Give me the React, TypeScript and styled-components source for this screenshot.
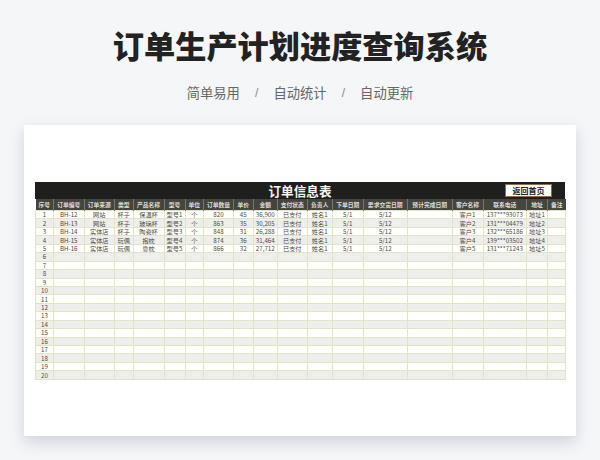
import React from 'react';
import styled, { createGlobalStyle } from 'styled-components';

const Global = createGlobalStyle`
  html, body { margin: 0; padding: 0; background: #f5f6f8; }
  body { width: 600px; height: 460px; overflow: hidden; font-family: "Noto Sans CJK SC", "Noto Sans", sans-serif; }
`;

const Page = styled.div`
  width: 600px; height: 460px; display: flex; flex-direction: column; align-items: center;
  box-sizing: border-box; padding-top: 23px;
`;
const Title = styled.h1`
  margin: 0; font-size: 31.2px; line-height: 44px; font-weight: 900; color: #222; white-space: nowrap;
`;
const Tagline = styled.div`
  margin-top: 16px; height: 20px; display: flex; align-items: center; color: #666;
  font-size: 13.3px; line-height: 20px; letter-spacing: 0;
`;
const Slash = styled.span`
  width: 33.5px; text-align: center; font-size: 12px; color: #888; font-family: "Liberation Sans", sans-serif;
`;
const Card = styled.section`
  margin-top: 22px; width: 552px; height: 311px; box-sizing: border-box; padding: 57px 11px 0;
  background: #fff; box-shadow: 0 6px 14px rgba(120, 130, 150, 0.3);
`;
const TitleBar = styled.div`
  height: 17px; background: #1f1f1d; display: grid; grid-template-columns: 1fr auto 1fr; align-items: center;
`;
const BarTitle = styled.div`
  grid-column: 2; color: #f4f4f4; font-size: 12.6px; line-height: 17px; font-weight: 700;
`;
const BackButton = styled.button`
  grid-column: 3; justify-self: end; margin: 0 13px 0 0; padding: 0; width: 47px; height: 13px; box-sizing: border-box;
  border: 1.5px solid #a5662a; background: #fff; color: #222; font: 700 8px/10px "Noto Sans CJK SC", sans-serif;
`;
const Sheet = styled.table`
  width: 530px; table-layout: fixed; border-collapse: collapse; font-size: 6.2px; color: #4a4a4a;
`;
const Head = styled.th`
  height: 11px; padding: 0; background: #45453f; color: #dcdcd6; font-size: 5.8px; line-height: 11px; font-weight: 700;
  border-left: 1px solid #77776c; white-space: nowrap; overflow: hidden;
  &:first-child { border-left: 0; }
`;
const Row = styled.tr<{ $even: boolean }>`
  height: 8.45px; background: ${p => (p.$even ? '#eeeeec' : '#fffffb')};
`;
const Cell = styled.td`
  padding: 0; height: 8.45px; box-sizing: border-box; border: 1px solid #e2e4c8; text-align: center; line-height: 7px; white-space: nowrap; overflow: hidden;
  color: #4a4a4a;
  font-family: "Noto Sans CJK SC", "Noto Sans", sans-serif;
`;

const columns: [string, number][] = [
  ['序号', 18], ['订单编号', 30.5], ['订单来源', 30.5], ['类型', 18.5], ['产品名称', 31], ['型号', 21], ['单位', 18.5],
  ['订单数量', 30], ['单价', 19.5], ['金额', 24.5], ['支付状态', 29.5], ['负责人', 25.5], ['下单日期', 30.5],
  ['要求交货日期', 44.5], ['预计完成日期', 44.5], ['客户名称', 31], ['联系电话', 43.5], ['地址', 21], ['备注', 18],
];
const orders = [
  ['BH-12', '网站', '杯子', '保温杯', '型号1', '个', '820', '45', '36,900', '已支付', '姓名1', '5/1', '5/12', '', '客户1', '137***93073', '地址1', ''],
  ['BH-13', '网站', '杯子', '玻璃杯', '型号2', '个', '863', '35', '30,205', '已支付', '姓名1', '5/1', '5/12', '', '客户2', '131***04479', '地址2', ''],
  ['BH-14', '实体店', '杯子', '陶瓷杯', '型号3', '个', '848', '31', '26,288', '已支付', '姓名1', '5/1', '5/12', '', '客户3', '132***65186', '地址3', ''],
  ['BH-15', '实体店', '玩偶', '抱枕', '型号4', '个', '874', '36', '31,464', '已支付', '姓名1', '5/1', '5/12', '', '客户4', '139***03502', '地址4', ''],
  ['BH-16', '实体店', '玩偶', '靠枕', '型号5', '个', '866', '32', '27,712', '已支付', '姓名1', '5/1', '5/12', '', '客户5', '131***71243', '地址5', ''],
];
const rows = Array.from({ length: 20 }, (_, i) => orders[i] ?? Array.from({ length: 18 }, () => ''));

export default function App() {
  return (
    <Page>
      <Global />
      <Title>订单生产计划进度查询系统</Title>
      <Tagline>
        <span>简单易用</span><Slash>/</Slash><span>自动统计</span><Slash>/</Slash><span>自动更新</span>
      </Tagline>
      <Card>
        <TitleBar>
          <BarTitle>订单信息表</BarTitle>
          <BackButton>返回首页</BackButton>
        </TitleBar>
        <Sheet>
          <colgroup>
            {columns.map(([name, width]) => <col key={name} style={{ width }} />)}
          </colgroup>
          <thead>
            <tr>{columns.map(([name]) => <Head key={name}>{name}</Head>)}</tr>
          </thead>
          <tbody>
            {rows.map((row, i) => (
              <Row key={i} $even={i % 2 === 1}>
                <Cell>{i + 1}</Cell>
                {row.map((value, j) => <Cell key={j}>{value}</Cell>)}
              </Row>
            ))}
          </tbody>
        </Sheet>
      </Card>
    </Page>
  );
}
